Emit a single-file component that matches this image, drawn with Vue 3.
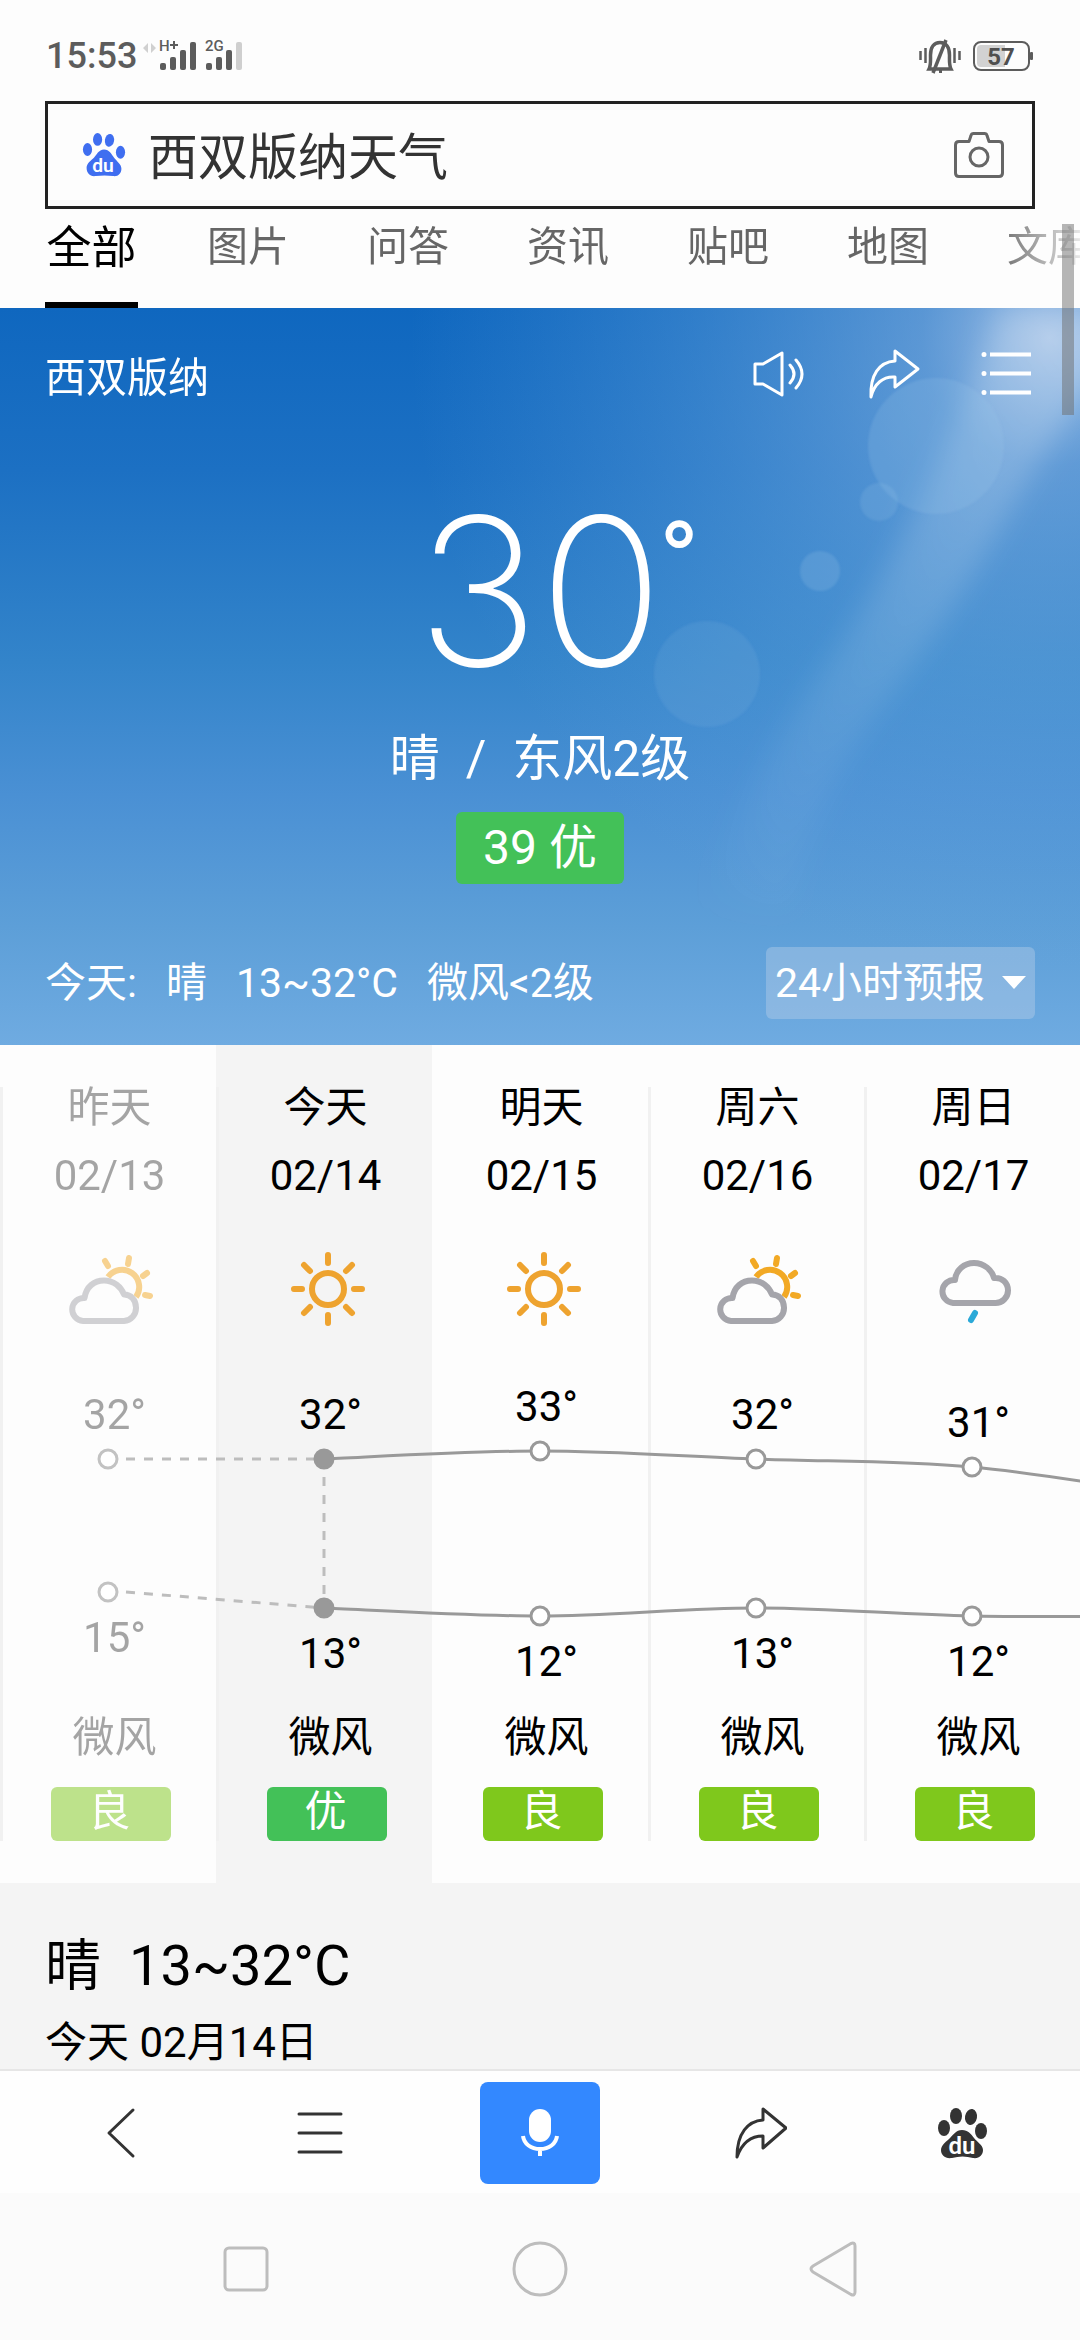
<script setup>
import { computed, ref } from 'vue'

const keyword = ref('西双版纳天气')
const range = ref('24小时预报')
const tabs = ['全部', '图片', '问答', '资讯', '贴吧', '地图', '文库']

const days = [
  { name: '昨天', date: '02/13', icon: 'partly', high: 32, low: 15, wind: '微风', air: '良', state: 'past' },
  { name: '今天', date: '02/14', icon: 'sun', high: 32, low: 13, wind: '微风', air: '优', state: 'now' },
  { name: '明天', date: '02/15', icon: 'sun', high: 33, low: 12, wind: '微风', air: '良', state: '' },
  { name: '周六', date: '02/16', icon: 'partly', high: 32, low: 13, wind: '微风', air: '良', state: '' },
  { name: '周日', date: '02/17', icon: 'rain', high: 31, low: 12, wind: '微风', air: '良', state: '' },
]
// the day past the right edge only steers the end of the curves
const nextDay = { high: 27, low: 12 }

const COL = 216
const pointY = (t) => Math.round(131 + (32 - t) * 7.85)
const pointX = (i) => COL / 2 + i * COL

const highTop = (d) => pointY(d.high) - 66
const lowTop = (d) => pointY(d.low) + 24 - highTop(d) - 42

function smooth(points) {
  let d = `M${points[0].x} ${points[0].y}`
  for (let i = 0; i < points.length - 1; i++) {
    const p0 = points[i - 1] || points[i]
    const p1 = points[i]
    const p2 = points[i + 1]
    const p3 = points[i + 2] || p2
    d += ` C${p1.x + (p2.x - p0.x) / 6} ${p1.y + (p2.y - p0.y) / 6} ${p2.x - (p3.x - p1.x) / 6} ${p2.y - (p3.y - p1.y) / 6} ${p2.x} ${p2.y}`
  }
  return d
}

const curves = computed(() =>
  ['high', 'low'].map((key) =>
    smooth([...days, nextDay].map((d, i) => ({ x: pointX(i), y: pointY(d[key]) })).slice(1))
  )
)
</script>

<template>
  <div class="page">
    <header class="status">
      <div class="status-side">
        <span class="clock">15:53</span>
        <svg class="signals" viewBox="0 0 102 36" aria-hidden="true">
          <path d="M7 5v10l-5-5zM10 5v10l5-5z" fill="#d0d0d0" />
          <g fill="#5c5c5c">
            <text x="18" y="13" font-size="15" font-weight="500">H</text>
            <path d="M29 6h8v2h-8zM32 3h2v8h-2z" />
            <rect x="19" y="25" width="6" height="7" rx="2" />
            <rect x="29" y="19" width="6" height="13" rx="2" />
            <rect x="39" y="12" width="6" height="20" rx="2" />
            <rect x="49" y="4" width="6" height="28" rx="2" />
            <text x="64" y="13" font-size="15" font-weight="500">2G</text>
            <rect x="65" y="25" width="6" height="7" rx="2" />
            <rect x="75" y="19" width="6" height="13" rx="2" />
            <rect x="85" y="12" width="6" height="20" rx="2" />
          </g>
          <rect x="95" y="4" width="6" height="28" rx="2" fill="#cfcfcf" />
        </svg>
      </div>
      <div class="status-side">
        <svg class="bell" viewBox="0 0 42 36" aria-hidden="true" fill="none" stroke="#5c5c5c">
          <path d="M1.500 13v9M6.500 10v15M35.500 10v15M40.500 13v9" stroke-width="2.500" />
          <path d="M10 31c2-4 1.500-7 1.500-14 0-8 3.500-12.500 9.500-12.500s9.500 4.500 9.500 12.500c0 7-.5 10 1.500 14z" stroke-width="3.500" />
          <path d="M27 2 14 35" stroke-width="3.500" />
          <path d="M20 33.500h3" stroke-width="3" />
        </svg>
        <svg class="battery" viewBox="0 0 62 32" aria-hidden="true">
          <rect x="2" y="2" width="55" height="28" rx="7" fill="none" stroke="#5c5c5c" stroke-width="2" />
          <path d="M9 5h24v22H9a4 4 0 0 1-4-4V9a4 4 0 0 1 4-4z" fill="#d2d2d2" />
          <rect x="58" y="12" width="3" height="8" rx="1" fill="#5c5c5c" />
          <text x="29" y="25" font-size="24" font-weight="700" fill="#4f4f4f" text-anchor="middle">57</text>
        </svg>
      </div>
    </header>

    <form class="search" role="search" @submit.prevent>
      <svg class="logo" viewBox="0 0 48 52" aria-hidden="true">
        <g fill="#3f6ef0">
          <ellipse cx="6" cy="20" rx="5" ry="7" />
          <ellipse cx="17" cy="9" rx="5" ry="7" />
          <ellipse cx="30" cy="10" rx="5" ry="7" transform="rotate(10 30 10)" />
          <ellipse cx="42" cy="23" rx="5" ry="7" />
          <path d="M24 20c6 0 8 5 11 9s8 7 8 12-4 9-9 8c-7-1-12-1-19 0-6 1-10-3-10-9 0-5 5-8 8-11s5-9 11-9z" />
        </g>
        <text x="23" y="45" font-size="21" font-weight="600" fill="#fff" text-anchor="middle">du</text>
      </svg>
      <input v-model="keyword" type="text" aria-label="搜索" />
      <button type="button" class="plain" aria-label="拍照搜索">
        <svg class="camera" viewBox="0 0 50 46" fill="none" stroke="#666" stroke-width="3" stroke-linejoin="round">
          <path d="M5 9.500h10l2-6q.5-2 2.500-2h11q2 0 2.500 2l2 6h10q3.500 0 3.500 3.500v28q0 3.500-3.500 3.500H5q-3.500 0-3.500-3.500V13q0-3.500 3.500-3.500z" />
          <circle cx="25" cy="25" r="9" />
        </svg>
      </button>
    </form>

    <nav class="tabs">
      <a v-for="(t, i) in tabs" :key="t" href="#" :class="{ active: i === 0 }">{{ t }}</a>
    </nav>

    <section class="hero">
      <svg class="sky" viewBox="0 0 1080 737" preserveAspectRatio="xMaxYMin slice" aria-hidden="true">
        <defs>
          <radialGradient id="glow" gradientUnits="userSpaceOnUse" cx="1050" cy="30" r="640">
            <stop offset="0" stop-color="#cfdcf2" stop-opacity=".75" />
            <stop offset=".2" stop-color="#a5c6ea" stop-opacity=".5" />
            <stop offset=".55" stop-color="#7fb4e4" stop-opacity=".3" />
            <stop offset="1" stop-color="#6aa8e0" stop-opacity="0" />
          </radialGradient>
          <linearGradient id="ray" x1="1" y1="0" x2="0" y2="1">
            <stop offset="0" stop-color="#fff" stop-opacity=".26" />
            <stop offset=".5" stop-color="#fff" stop-opacity=".13" />
            <stop offset="1" stop-color="#fff" stop-opacity="0" />
          </linearGradient>
          <filter id="soft" x="-20%" y="-20%" width="140%" height="140%">
            <feGaussianBlur stdDeviation="14" />
          </filter>
          <filter id="edge" x="-20%" y="-20%" width="140%" height="140%">
            <feGaussianBlur stdDeviation="1" />
          </filter>
        </defs>
        <rect width="1080" height="737" fill="url(#glow)" />
        <path d="M1000 0h110V50Q1050 130 1000 220T880 400 790 600H700Q740 480 830 350T1000 0z" fill="url(#ray)" filter="url(#soft)" />
        <g fill="#9cc6ea" filter="url(#edge)">
          <circle cx="936" cy="138" r="68" opacity=".2" />
          <circle cx="879" cy="194" r="19" opacity=".18" />
          <circle cx="820" cy="263" r="20" opacity=".22" />
          <circle cx="707" cy="366" r="53" opacity=".12" />
        </g>
      </svg>

      <div class="hero-top">
        <h1>西双版纳</h1>
        <div class="actions">
          <button type="button" class="plain" aria-label="播报">
            <svg viewBox="0 0 54 54" fill="none" stroke="#fff" stroke-width="3" stroke-linejoin="round">
              <path d="M2 17h8L29 6v42L10 37H2z" />
              <path d="M37 18q8 9 0 18M43 13q12 14 0 28" stroke-linecap="round" />
            </svg>
          </button>
          <button type="button" class="plain" aria-label="分享">
            <svg viewBox="0 0 54 54" fill="none" stroke="#fff" stroke-width="3" stroke-linejoin="round">
              <path d="M28 4 51 22 28 40V30C16 29 7 37 4 50 3 28 12 15 28 14z" />
            </svg>
          </button>
          <button type="button" class="plain" aria-label="列表">
            <svg viewBox="0 0 54 54" fill="none" stroke="#fff" stroke-width="4">
              <path d="M9 7.500h41M9 26.500h41M9 45.500h41" />
              <path d="M3 7.500h.01M3 26.500h.01M3 45.500h.01" stroke-width="5" stroke-linecap="round" />
            </svg>
          </button>
        </div>
      </div>

      <div class="big"><span>30<sup>°</sup></span></div>
      <div class="condition"><span>晴</span><span>/</span><span>东风2级</span></div>
      <div class="aqi">39 优</div>

      <div class="today">
        <p><span>今天:</span><span>晴</span><span>13~32°C</span><span>微风&lt;2级</span></p>
        <label class="range">
          <select v-model="range" aria-label="预报范围">
            <option>24小时预报</option>
          </select>
          <svg viewBox="0 0 24 14" aria-hidden="true"><path d="M0 0h24L12 13z" fill="#fff" /></svg>
        </label>
      </div>
    </section>

    <section class="forecast">
      <ul>
        <li v-for="d in days" :key="d.date" :class="d.state">
          <div class="day">
            <span>{{ d.name }}</span>
            <span class="date">{{ d.date }}</span>
            <svg class="weather" viewBox="0 0 90 80" fill="none" stroke-width="6" stroke-linejoin="round" aria-hidden="true">
              <g v-if="d.icon === 'sun'" stroke="#eea32f">
                <circle cx="45" cy="40" r="16" />
                <path
                  d="M45 6v8M45 66v8M11 40h8M71 40h8M21 16l6 6M63 58l6 6M21 64l6-6M63 22l6-6"
                  stroke-linecap="round"
                />
              </g>
              <template v-else-if="d.icon === 'partly'">
                <g stroke="#f2a925">
                  <path d="M41 28A17 17 0 0 1 69 48" />
                  <path d="M38 12l3 5M62 9l-1 6M80 24l-4 3M78 46l5 1" stroke-linecap="round" />
                </g>
                <path
                  d="M16 72A11.500 11.500 0 0 1 17.500 49C19 38 27 31.500 37 31.500S54 38 57 45.500C64 45.500 69 51 69 58.500A13 13 0 0 1 57 72z"
                  stroke="#a5a5ab"
                />
              </template>
              <template v-else>
                <path
                  d="M22 54A11.500 11.500 0 0 1 24 31C25 21 33 14 43 14S61 21 63 29C71 28 77 34 77 41.500A12.500 12.500 0 0 1 64 54z"
                  stroke="#a5a5ab"
                />
                <path d="M44 64l-4 7" stroke="#2ba9d8" stroke-linecap="round" />
              </template>
            </svg>
            <div class="temps">
              <div :style="{ marginTop: highTop(d) + 'px' }">{{ d.high }}°</div>
              <div :style="{ marginTop: lowTop(d) + 'px' }">{{ d.low }}°</div>
            </div>
            <span class="wind">{{ d.wind }}</span>
            <span class="air" :class="{ good: d.air === '优' }">{{ d.air }}</span>
          </div>
        </li>
      </ul>
      <svg class="chart" viewBox="0 0 1080 387" fill="none" stroke="#999" stroke-width="3" aria-hidden="true">
        <path v-for="c in curves" :key="c" :d="c" />
        <g stroke="#bdbdbd" stroke-dasharray="9 9">
          <path v-for="k in ['high', 'low']" :key="k" :d="`M126 ${pointY(days[0][k])}L324 ${pointY(days[1][k])}`" />
          <path :d="`M324 ${pointY(days[1].high) + 18}V${pointY(days[1].low)}`" />
        </g>
        <template v-for="(d, i) in days" :key="d.date">
          <circle
            v-for="k in ['high', 'low']"
            :key="k"
            :cx="pointX(i)"
            :cy="pointY(d[k])"
            r="9"
            :fill="d.state === 'now' ? '#999' : '#fff'"
            :stroke="d.state === 'past' ? '#c2c2c2' : '#999'"
          />
        </template>
      </svg>
    </section>

    <section class="detail">
      <h2><span>晴</span><span>13~32°C</span></h2>
      <p>今天 02月14日</p>
    </section>

    <nav class="toolbar">
      <button type="button" class="plain" aria-label="返回">
        <svg viewBox="0 0 54 54" fill="none" stroke="#333" stroke-width="3" stroke-linejoin="round" stroke-linecap="round">
          <path d="M40 4 16 27 40 50" />
        </svg>
      </button>
      <button type="button" class="plain" aria-label="菜单">
        <svg viewBox="0 0 54 54" stroke="#333" stroke-width="3" stroke-linecap="round">
          <path d="M6 8h42M6 27h42M6 46h42" />
        </svg>
      </button>
      <button type="button" class="mic" aria-label="语音搜索">
        <svg viewBox="0 0 54 54">
          <rect x="16" y="3" width="22" height="33" rx="11" fill="#fff" />
          <path d="M10 30c1 8 8 13 17 13s16-5 17-13M27 43v7" fill="none" stroke="#fff" stroke-width="4" />
        </svg>
      </button>
      <button type="button" class="plain" aria-label="分享">
        <svg viewBox="-2 0 54 54" fill="none" stroke="#333" stroke-width="3" stroke-linejoin="round">
          <path d="M28 3 51 22 28 42V30C16 30 7 37 2 51 2 27 13 15 28 14z" />
        </svg>
      </button>
      <button type="button" class="plain" aria-label="首页">
        <svg viewBox="-2 0 54 54">
          <g fill="#333">
            <ellipse cx="9" cy="22" rx="6" ry="8" />
            <ellipse cx="21" cy="10" rx="6" ry="8" />
            <ellipse cx="36" cy="11" rx="6" ry="8" transform="rotate(10 36 11)" />
            <ellipse cx="46" cy="25" rx="6" ry="8" />
            <path d="M27 24c6 0 9 4 12 8s9 7 9 12-4 9-10 8c-7-2-14-2-21 0-7 1-11-3-11-8s6-9 9-12 6-8 12-8z" />
          </g>
          <text x="27" y="48" font-size="24" font-weight="600" fill="#fff" text-anchor="middle">du</text>
        </svg>
      </button>
    </nav>

    <nav class="system">
      <button type="button" class="plain" aria-label="最近任务">
        <svg viewBox="0 0 60 60"><rect x="9" y="9" width="42" height="42" rx="4" /></svg>
      </button>
      <button type="button" class="plain" aria-label="主屏幕">
        <svg viewBox="0 0 60 60"><circle cx="30" cy="30" r="26" /></svg>
      </button>
      <button type="button" class="plain" aria-label="返回上一级">
        <svg viewBox="0 0 60 60"><path d="M47 4.500Q51 3 51 7v46q0 4-4 2.500L9 33q-4-3 0-6z" stroke-linejoin="round" /></svg>
      </button>
    </nav>

    <div class="scrollbar"></div>
  </div>
</template>

<style>
body {
  background: #fdfdfd;
}
</style>

<style scoped>
.page {
  position: relative;
  display: flex;
  flex-direction: column;
  min-height: 100vh;
  overflow: hidden;
  font-family: Roboto, "Noto Sans CJK SC", sans-serif;
  font-size: 42px;
  line-height: 42px;
  color: #000;
}
.page *,
.page {
  box-sizing: border-box;
}
h1,
h2,
p,
ul {
  margin: 0;
  padding: 0;
  font-weight: 400;
  list-style: none;
}
button,
input,
select {
  font: inherit;
  color: inherit;
  border: 0;
  padding: 0;
  margin: 0;
  background: none;
  outline: 0;
}
svg {
  display: block;
}
.status {
  display: flex;
  justify-content: space-between;
  padding: 36px 46px 25px;
}
.status-side {
  display: flex;
  align-items: center;
  height: 40px;
}
.clock {
  font-size: 36px;
  font-weight: 500;
  color: #5c5c5c;
}
.signals {
  width: 102px;
  height: 36px;
  margin-left: 4px;
}
.bell {
  width: 42px;
  height: 36px;
  margin-right: 11px;
}
.battery {
  width: 62px;
  height: 32px;
}
.search {
  display: flex;
  align-items: center;
  height: 108px;
  margin: 0 45px;
  padding: 0 28px 0 34px;
  border: 3px solid #222;
}
.logo {
  width: 44px;
  height: 48px;
}
.search input {
  flex: 1;
  min-width: 0;
  margin-left: 22px;
  padding-top: 6px;
  font-size: 50px;
  line-height: 72px;
  color: #333;
}
.camera {
  width: 50px;
  height: 46px;
}
.tabs {
  display: flex;
  padding-left: 45px;
  white-space: nowrap;
  overflow: hidden;
  -webkit-mask-image: linear-gradient(90deg, #000 92%, rgba(0, 0, 0, 0.15));
  mask-image: linear-gradient(90deg, #000 92%, rgba(0, 0, 0, 0.15));
}
.tabs a {
  flex: 0 0 160px;
  padding: 8px 0 25px;
  border-bottom: 6px solid transparent;
  text-align: center;
  font-size: 41px;
  line-height: 60px;
  color: #666;
  text-decoration: none;
}
.tabs a.active {
  flex: 0 0 93px;
  margin-right: 30px;
  padding: 10px 0 23px;
  font-size: 45px;
  color: #000;
  border-color: #000;
}
.hero {
  position: relative;
  padding: 39px 45px 26px;
  color: #fff;
  background: linear-gradient(#0f67bf, #1c70c3 22%, #3384ca 48%, #4a90d4 66%, #5d9fd8 84%, #6fabe1);
}
.sky {
  position: absolute;
  inset: 0;
  width: 100%;
  height: 100%;
}
.hero > div {
  position: relative;
}
.hero-top,
.actions {
  display: flex;
  align-items: center;
}
.hero-top {
  justify-content: space-between;
}
h1 {
  padding-top: 8px;
  font-size: 41px;
}
.actions {
  gap: 60px;
}
.actions svg,
.toolbar svg {
  width: 54px;
  height: 54px;
}
.big {
  margin-top: 110px;
  text-align: center;
  font-family: Inter, Roboto, sans-serif;
  font-size: 206px;
  font-weight: 200;
  line-height: 160px;
}
.big span {
  position: relative;
}
.big sup {
  position: absolute;
  left: 98%;
  bottom: 54px;
  font-family: Roboto, sans-serif;
  font-size: 110px;
  font-weight: 400;
  line-height: 200px;
}
.condition {
  display: flex;
  justify-content: center;
  gap: 26px;
  margin-top: 58px;
  font-size: 50px;
  line-height: 60px;
}
.aqi {
  width: fit-content;
  margin: 23px auto 0;
  padding: 0 27px;
  border-radius: 6px;
  background: #43c158;
  font-size: 48px;
  line-height: 72px;
}
.today {
  display: flex;
  justify-content: space-between;
  align-items: center;
  margin-top: 63px;
  font-size: 41px;
}
.today p {
  display: flex;
  gap: 29px;
}
.range {
  display: flex;
  align-items: center;
  gap: 16px;
  height: 72px;
  padding: 0 9px;
  border-radius: 6px;
  background: rgba(200, 215, 235, 0.35);
}
.range select {
  appearance: none;
  height: 60px;
}
.range svg {
  width: 24px;
  height: 14px;
}
.forecast {
  position: relative;
}
.forecast ul {
  display: grid;
  grid-template-columns: repeat(5, 1fr);
}
.forecast li {
  padding: 42px 0;
}
.forecast li.now {
  background: #f4f4f4;
}
.day {
  display: flex;
  flex-direction: column;
  align-items: center;
  border-left: 3px solid #f1f1f1;
}
.now + li .day {
  border-color: transparent;
}
.past .day > * {
  opacity: 0.35;
}
.past .day > .air,
.past .day > .weather {
  opacity: 0.5;
}
.date {
  margin-top: 26px;
}
.weather {
  width: 90px;
  height: 80px;
  margin: 52px 0 0 5px;
}
.temps {
  height: 388px;
  padding-left: 10px;
  overflow: hidden;
}
.wind {
  padding-left: 10px;
}
.air {
  width: 120px;
  height: 54px;
  margin: 28px 0 0 3px;
  padding-right: 3px;
  border-radius: 6px;
  background: #7fc81c;
  color: #fff;
  text-align: center;
  line-height: 50px;
}
.air.good {
  background: #43c158;
}
.chart {
  position: absolute;
  left: 0;
  top: 283px;
  width: 100%;
}
.detail {
  padding: 50px 45px 5px;
  background: #f4f4f4;
  border-bottom: 2px solid #e6e6e6;
}
.detail h2 {
  display: flex;
  gap: 28px;
  font-size: 56px;
  line-height: 66px;
}
.detail p {
  margin-top: 23px;
}
.toolbar {
  display: flex;
  justify-content: space-between;
  align-items: center;
  padding: 11px 80px 9px;
  background: #fefefe;
}
.toolbar .plain {
  display: flex;
  justify-content: center;
  width: 80px;
}
.mic {
  display: flex;
  justify-content: center;
  align-items: center;
  width: 120px;
  height: 102px;
  border-radius: 8px;
  background: #3388ff;
}
.system {
  flex: 1;
  display: flex;
  justify-content: space-between;
  align-items: center;
  padding: 40px 20% 36px;
  background: #fbfbfb;
}
.system svg {
  width: 60px;
  height: 60px;
  fill: none;
  stroke: #bdbdbd;
  stroke-width: 3;
}
.scrollbar {
  position: absolute;
  right: 6px;
  top: 224px;
  width: 12px;
  height: 191px;
  background: rgba(110, 110, 110, 0.5);
}
</style>
